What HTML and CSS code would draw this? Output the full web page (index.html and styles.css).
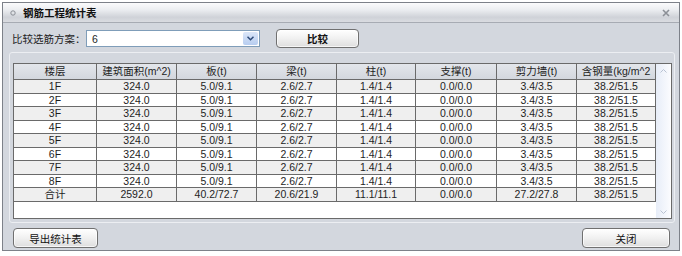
FILE: index.html
```html
<!DOCTYPE html>
<html lang="zh-CN">
<head>
<meta charset="utf-8">
<title>钢筋工程统计表</title>
<link rel="stylesheet" href="styles.css">
</head>
<body>
<div class="window">
  <div class="titlebar">
    <svg class="ticon" width="6" height="6" viewBox="0 0 6 6"><circle cx="3" cy="3" r="2.2" fill="none" stroke="#8a8e96" stroke-width="1"/></svg>
    <span class="title">钢筋工程统计表</span>
    <svg class="close" width="8" height="8" viewBox="0 0 8 8"><path d="M1 1L7 7M7 1L1 7" stroke="#8c9097" stroke-width="1.6"/></svg>
  </div>
  <div class="toolbar">
    <span class="label">比较选筋方案：</span>
    <div class="combo">
      <span class="combo-text">6</span>
      <span class="combo-btn"><svg width="7" height="5" viewBox="0 0 7 5"><path d="M0.5 0.8L3.5 3.8L6.5 0.8" fill="none" stroke="#2d4a78" stroke-width="1.5"/></svg></span>
    </div>
    <button class="btn btn-compare">比较</button>
  </div>
  <div class="group">
    <div class="panel">
      <div class="grid">
        <div class="row head"><div>楼层</div><div>建筑面积(m^2)</div><div>板(t)</div><div>梁(t)</div><div>柱(t)</div><div>支撑(t)</div><div>剪力墙(t)</div><div>含钢量(kg/m^2</div></div>
        <div class="row odd"><div>1F</div><div>324.0</div><div>5.0/9.1</div><div>2.6/2.7</div><div>1.4/1.4</div><div>0.0/0.0</div><div>3.4/3.5</div><div>38.2/51.5</div></div>
        <div class="row even"><div>2F</div><div>324.0</div><div>5.0/9.1</div><div>2.6/2.7</div><div>1.4/1.4</div><div>0.0/0.0</div><div>3.4/3.5</div><div>38.2/51.5</div></div>
        <div class="row odd"><div>3F</div><div>324.0</div><div>5.0/9.1</div><div>2.6/2.7</div><div>1.4/1.4</div><div>0.0/0.0</div><div>3.4/3.5</div><div>38.2/51.5</div></div>
        <div class="row even"><div>4F</div><div>324.0</div><div>5.0/9.1</div><div>2.6/2.7</div><div>1.4/1.4</div><div>0.0/0.0</div><div>3.4/3.5</div><div>38.2/51.5</div></div>
        <div class="row odd"><div>5F</div><div>324.0</div><div>5.0/9.1</div><div>2.6/2.7</div><div>1.4/1.4</div><div>0.0/0.0</div><div>3.4/3.5</div><div>38.2/51.5</div></div>
        <div class="row even"><div>6F</div><div>324.0</div><div>5.0/9.1</div><div>2.6/2.7</div><div>1.4/1.4</div><div>0.0/0.0</div><div>3.4/3.5</div><div>38.2/51.5</div></div>
        <div class="row odd"><div>7F</div><div>324.0</div><div>5.0/9.1</div><div>2.6/2.7</div><div>1.4/1.4</div><div>0.0/0.0</div><div>3.4/3.5</div><div>38.2/51.5</div></div>
        <div class="row even"><div>8F</div><div>324.0</div><div>5.0/9.1</div><div>2.6/2.7</div><div>1.4/1.4</div><div>0.0/0.0</div><div>3.4/3.5</div><div>38.2/51.5</div></div>
        <div class="row odd"><div>合计</div><div>2592.0</div><div>40.2/72.7</div><div>20.6/21.9</div><div>11.1/11.1</div><div>0.0/0.0</div><div>27.2/27.8</div><div>38.2/51.5</div></div>
      </div>
      <div class="scrollbar">
        <svg class="sb-arrow" width="7" height="4" viewBox="0 0 7 4"><path d="M0.5 3.5L3.5 0.5L6.5 3.5" fill="none" stroke="#b9c2d2" stroke-width="1"/></svg>
        <svg class="sb-arrow" width="7" height="4" viewBox="0 0 7 4"><path d="M0.5 0.5L3.5 3.5L6.5 0.5" fill="none" stroke="#b9c2d2" stroke-width="1"/></svg>
      </div>
    </div>
  </div>
  <div class="footer">
    <button class="btn btn-export">导出统计表</button>
    <button class="btn btn-close">关闭</button>
  </div>
</div>
</body>
</html>
```
FILE: styles.css
```css
* { box-sizing: border-box; }
html, body { margin: 0; padding: 0; background: #ffffff; }
body {
  font-family: "Liberation Sans", "Noto Sans CJK SC", sans-serif;
  font-size: 10.5px;
  color: #1e1e1e;
}
.window {
  margin: 2px 0 0 2px;
  width: 678px;
  height: 249px;
  border: 1px solid #7d8189;
  background: #d3d7de;
  display: flex;
  flex-direction: column;
}
.titlebar {
  height: 20px;
  flex: none;
  display: flex;
  align-items: center;
  border-bottom: 1px solid #a7abb3;
  background: linear-gradient(#fbfbfc 0%, #eceef1 35%, #cfd2d8 75%, #dadce1 100%);
  padding-left: 7px;
}
.ticon { margin-right: 7px; }
.title { font-weight: bold; font-size: 10.5px; color: #111; }
.close { margin-left: auto; margin-right: 9px; }
.toolbar {
  display: flex;
  align-items: center;
  height: 19px;
  margin-top: 6px;
  padding-left: 9px;
}
.label { width: 74px; }
.combo {
  width: 174px;
  height: 17px;
  border: 1px solid #7f9db9;
  background: #fff;
  display: flex;
  align-items: center;
  padding: 1px;
}
.combo-text { padding-left: 4px; flex: 1; }
.combo-btn {
  width: 15px;
  height: 13px;
  display: flex;
  align-items: center;
  justify-content: center;
  background: linear-gradient(#dbe6f8, #b7cdf0);
  border-radius: 2px;
}
.btn {
  font-family: "Liberation Sans", "Noto Sans CJK SC", sans-serif;
  font-size: 10.5px;
  color: #111;
  border: 1px solid #707070;
  border-radius: 4px;
  background: linear-gradient(#ffffff 0%, #f2f2f2 45%, #dedede 100%);
  padding: 0;
  height: 19px;
  box-shadow: inset 0 0 0 1px rgba(255,255,255,0.7);
}
.btn-compare { width: 83px; margin-left: 16px; font-weight: bold; }
.group {
  margin: 4px 4px 0 6px;
  border: 1px solid #eceef2;
  border-radius: 3px;
  padding: 10px 2px 3px 3px;
}
.panel {
  height: 156px;
  border: 1px solid #6a6a6a;
  background: #fff;
  display: flex;
}
.grid { width: 642px; display: flex; flex-direction: column; }
.row {
  display: grid;
  grid-template-columns: 83px 80px 80px 80px 79px 81px 80px 79px;
}
.row > div {
  border-right: 1px solid #6a6a6a;
  border-bottom: 1px solid #6a6a6a;
  display: flex;
  align-items: center;
  justify-content: center;
  white-space: nowrap;
  overflow: hidden;
  line-height: 1;
}
.row.head { height: 16px; background: linear-gradient(#e3e6eb, #d2d6dd); }
.row.head > div { font-size: 10.5px; }
.row.odd { height: 14px; background: #efefef; }
.row.even { height: 13px; background: #ffffff; }
.scrollbar {
  width: 14px;
  background: linear-gradient(to right, #e7edf8, #fafbfe);
  display: flex;
  flex-direction: column;
  justify-content: space-between;
  align-items: center;
  padding: 5px 0 4px;
}
.footer {
  display: flex;
  justify-content: space-between;
  margin-top: 5px;
  padding: 0 9px 0 10px;
}
.btn-export { width: 85px; height: 20px; }
.btn-close { width: 88px; height: 20px; }
```
